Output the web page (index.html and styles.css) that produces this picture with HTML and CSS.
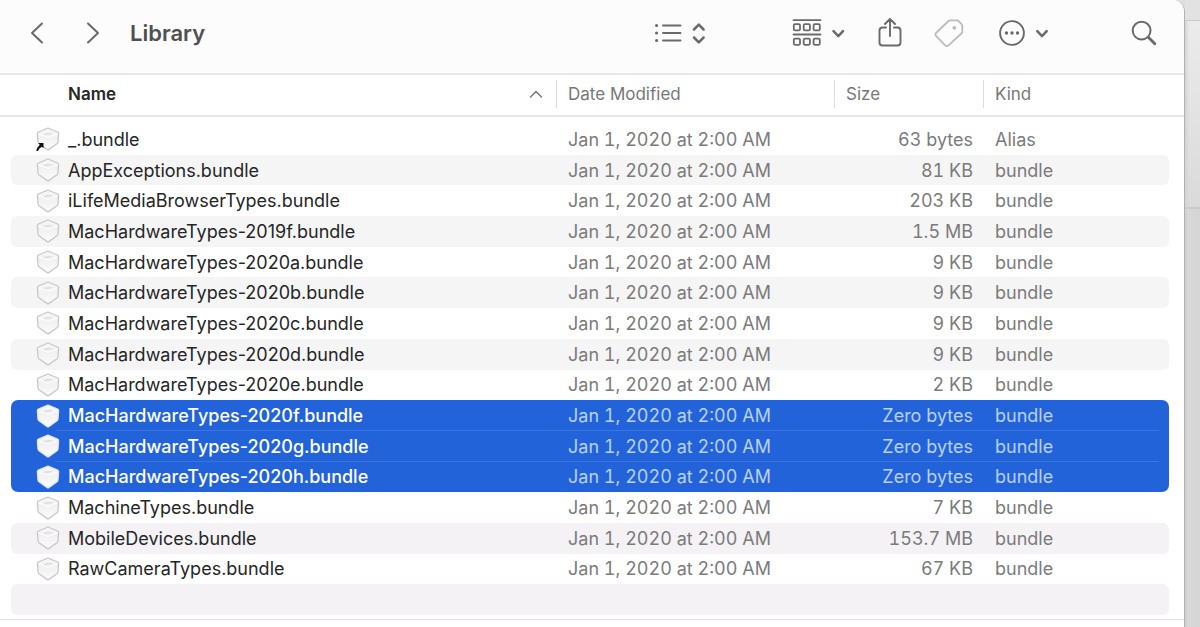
FILE: index.html
```
<!DOCTYPE html>
<html lang="en">
<head>
<meta charset="utf-8">
<title>Library</title>
<link rel="stylesheet" href="styles.css">
</head>
<body>
<svg class="defs" aria-hidden="true">
  <defs>
    <linearGradient id="face" x1="0" y1="0" x2="0" y2="1">
      <stop offset="0" stop-color="#f8f8f8"/>
      <stop offset="0.4" stop-color="#f1f1f1"/>
      <stop offset="1" stop-color="#fbfbfb"/>
    </linearGradient>
    <symbol id="bundle" viewBox="0 0 24 24">
      <path d="M12 1 L21.6 5 Q22.7 5.5 22.6 6.7 L22 15 Q21.9 16.2 21 16.8 L12.7 22.6 Q12 23.1 11.3 22.6 L3 16.8 Q2.1 16.2 2 15 L1.4 6.7 Q1.3 5.5 2.4 5 Z" fill="url(#face)" stroke="var(--edge)" stroke-width="1.3" stroke-linejoin="round"/>
      <path d="M3 7 L11 10 Q12 10.4 13 10 L21 7" fill="none" stroke="#fff" stroke-width="1"/>
      <path d="M7.6 7 Q12 5.6 17 6.4 L15.4 7.6 Q12 7 8.8 8Z" fill="#dcdcdc"/>
    </symbol>
  </defs>
</svg>
<div class="desktop">
  <main class="window">
    <header class="toolbar">
      <button class="tool back" aria-label="Back"><svg width="14" height="24" viewBox="0 0 14 24"><path d="M12 2.5 L2 12 L12 21.5"/></svg></button>
      <button class="tool forward" aria-label="Forward"><svg width="14" height="24" viewBox="0 0 14 24"><path d="M2 2.5 L12 12 L2 21.5"/></svg></button>
      <h1 class="title">Library</h1>
      <div class="actions">
        <button class="tool" aria-label="View as list"><svg width="52" height="24" viewBox="0 0 52 24"><path d="M9 4.5H26.5M9 12H26.5M9 19.5H26.5" stroke-width="1.9"/><path class="dot" d="M1 4.5a1.6 1.6 0 1 0 3.2 0a1.6 1.6 0 1 0-3.2 0M1 12a1.6 1.6 0 1 0 3.2 0a1.6 1.6 0 1 0-3.2 0M1 19.5a1.6 1.6 0 1 0 3.2 0a1.6 1.6 0 1 0-3.2 0"/><path d="M40 8.5L44.8 3.7L49.6 8.5M40 16.5L44.8 21.3L49.6 16.5" stroke-width="2.5"/></svg></button>
        <button class="tool group" aria-label="Group items"><svg width="54" height="28" viewBox="0 0 54 28"><g stroke-width="1.8"><path d="M1.5 1.2H28.5M1.5 15.5H28.5"/><rect x="1.8" y="5.2" width="6.2" height="6.2" rx="1.2"/><rect x="11.7" y="5.2" width="6.2" height="6.2" rx="1.2"/><rect x="21.6" y="5.2" width="6.2" height="6.2" rx="1.2"/><rect x="1.8" y="19.6" width="6.2" height="6.2" rx="1.2"/><rect x="11.7" y="19.6" width="6.2" height="6.2" rx="1.2"/><rect x="21.6" y="19.6" width="6.2" height="6.2" rx="1.2"/></g><path d="M41.5 12.2L46.3 17.2L51 12.2" stroke-width="2.5"/></svg></button>
        <button class="tool share" aria-label="Share"><svg width="24" height="30" viewBox="0 0 24 30"><path d="M8 9.5H4.5Q1.5 9.5 1.5 12.5V24.5Q1.5 27.5 4.5 27.5H19.5Q22.5 27.5 22.5 24.5V12.5Q22.5 9.5 19.5 9.5H16M12 18V1.5M7 6L12 1L17 6" stroke-width="1.9"/></svg></button>
        <button class="tool tag" aria-label="Edit tags" disabled><svg width="30" height="30" viewBox="0 0 30 30"><path d="M16.2 2.4H22.6Q23.8 2.4 24.8 3.4L27.3 5.9Q28.3 6.9 28.3 8.2V13.4Q28.3 14.6 27.4 15.5L14.5 27.3Q12.8 28.8 11.2 27.3L2 17.8Q.8 16.4 2 15L14 3.5Q15 2.4 16.2 2.4Z" stroke-width="1.8"/><circle class="dot" cx="20.4" cy="9.8" r="1.9"/></svg></button>
        <button class="tool more" aria-label="More actions"><svg width="50" height="28" viewBox="0 0 50 28"><circle cx="13" cy="14" r="11.9" stroke-width="1.9"/><path class="dot" d="M5.8 14a1.7 1.7 0 1 0 3.4 0a1.7 1.7 0 1 0-3.4 0M11.3 14a1.7 1.7 0 1 0 3.4 0a1.7 1.7 0 1 0-3.4 0M16.8 14a1.7 1.7 0 1 0 3.4 0a1.7 1.7 0 1 0-3.4 0"/><path d="M38.3 12.2L43 17.2L47.7 12.2" stroke-width="2.5"/></svg></button>
        <button class="tool search" aria-label="Search"><svg width="26" height="26" viewBox="0 0 26 26"><circle cx="10.6" cy="10.6" r="8.9" stroke-width="2"/><path d="M17.3 17.3L23.8 23.8" stroke-width="2.9"/></svg></button>
      </div>
    </header>
    <div class="list">
      <table class="files">
        <colgroup><col class="c-left"><col class="c-name"><col class="c-date"><col class="c-size"><col class="c-kind"><col class="c-right"></colgroup>
        <thead><tr><td></td><th class="sorted" scope="col"><div class="heading"><span>Name</span><svg width="14" height="8" viewBox="0 0 14 8"><path d="M1.5 7L7 1.5L12.5 7"/></svg></div></th><th scope="col"><div class="heading">Date Modified</div></th><th scope="col"><div class="heading">Size</div></th><th scope="col"><div class="heading">Kind</div></th><td></td></tr></thead>
        <tbody id="rows"></tbody>
      </table>
    </div>
    <footer class="pathbar"></footer>
  </main>
  <div class="behind" aria-hidden="true"><div class="edge-top"></div><div class="edge-mid"></div></div>
</div>
<script src="files.js"></script>
</body>
</html>
```
FILE: styles.css
```
* { box-sizing: border-box; }
body {
  margin: 0;
  font-family: Inter, "Noto Sans", sans-serif;
  font-size: 18px;
  color: #262626;
  background: #dedede;
}
.defs { position: absolute; width: 0; height: 0; }
.desktop { display: flex; min-height: 100vh; }
.window {
  flex: 1;
  min-width: 0;
  display: flex;
  flex-direction: column;
  background: #fff;
  border-right: 1px solid #b2b2b2;
  border-top-right-radius: 12px;
  overflow: hidden;
}
.behind {
  width: 15px;
  display: flex;
  flex-direction: column;
  background: linear-gradient(to right, #cfcfcf, #d9d8d9 3px, #d6d5d6);
}
.edge-top { height: 21px; background: #e2e2e2; border-bottom: 1px solid #cacaca; }
.edge-mid { height: 188px; background: linear-gradient(to right, #d2d2d2, transparent 4px), linear-gradient(#ebebeb, #dadada); border-bottom: 2px solid #cacaca; }

.toolbar {
  display: flex;
  align-items: center;
  height: 75px;
  padding: 0 27px 8px 30px;
  background: #fcfcfc;
  border-bottom: 2px solid #e7e7e7;
}
.tool {
  display: flex;
  padding: 0;
  border: 0;
  background: none;
  color: #6a6a6a;
}
.tool svg { fill: none; stroke: currentColor; stroke-width: 2; stroke-linecap: round; stroke-linejoin: round; }
.tool .dot { fill: currentColor; stroke: none; }
.tool:disabled { color: #bcbcbc; }
.forward { margin-left: 42px; }
.title { margin: 0 0 0 30px; font-size: 22px; font-weight: 600; line-height: 28px; color: #505050; }
.actions { display: flex; align-items: center; margin-left: auto; }
.group { margin-left: 86px; }
.share { margin-left: 32px; }
.tag { margin-left: 32px; }
.more { margin-left: 35px; }
.search { margin-left: 82px; }

.list { flex: 1; display: grid; }
.files { width: 100%; height: 100%; table-layout: fixed; border-collapse: separate; border-spacing: 0; }
.files td, .files th { padding: 0; white-space: nowrap; }
.c-left { width: 11px; }
.c-date { width: 278px; }
.c-size { width: 149px; }
.c-kind { width: 186px; }
.c-right { width: 15px; }

thead td, thead th { height: 42px; border-bottom: 2px solid #e7e7e7; }
thead .heading { margin-bottom: 2px; }
thead th { font-size: 17px; font-weight: 400; color: #777; text-align: left; }
.heading { display: flex; align-items: center; height: 28px; padding-left: 11px; border-left: 1px solid #ddd; }
thead .sorted { font-weight: 600; color: #262626; }
.sorted .heading { justify-content: space-between; padding: 0 13px 0 57px; border-left: 0; }
.heading svg { fill: none; stroke: #777; stroke-width: 1.5; stroke-linecap: round; stroke-linejoin: round; }

tbody::before { content: ""; display: table-row; height: 7px; }
tbody td { color: #7b7b7b; }
tbody .name { color: #262626; }
.entry { display: flex; align-items: center; height: 24px; padding-left: 25px; gap: 8px; }
.icon { position: relative; width: 24px; height: 24px; --edge: #c8c8c8; }
.icon svg { display: block; width: 24px; height: 24px; }
.icon .alias { position: absolute; left: 0; bottom: 0; width: 8px; height: 9px; fill: #111; }
tbody .date, tbody .kind { padding-left: 12px; }
tbody .date, tbody .size { font-variant-numeric: tabular-nums; }
tbody .size { padding-right: 10px; text-align: right; }
.stripe .cell { background: #f5f5f5; }
.stripe.tinted .cell { background: #f4f2f5; }
.stripe .name { border-radius: 6px 0 0 6px; }
.stripe .kind { border-radius: 0 6px 6px 0; }

.selected .cell { position: relative; background: #2363da; color: #b9d1fb; }
.selected .name { color: #fff; font-weight: 500; }
.selected .icon { --edge: #dfe6f5; }
.selected.first .name { border-top-left-radius: 7px; }
.selected.first .kind { border-top-right-radius: 7px; }
.selected.last .name { border-bottom-left-radius: 7px; }
.selected.last .kind { border-bottom-right-radius: 7px; }
.selected:not(.last) .cell::after { content: ""; position: absolute; left: 0; right: 0; bottom: 0; height: 1px; background: #3b75e0; }
.selected:not(.last) .name::after { left: 45px; }
.selected:not(.last) .kind::after { right: 10px; }

.pathbar { height: 8px; margin-top: 4px; border-top: 1px solid #dfdfdf; }
```
FILE: files.js
```
const files = [
  ["_.bundle", "63 bytes", "Alias"],
  ["AppExceptions.bundle", "81 KB", "bundle"],
  ["iLifeMediaBrowserTypes.bundle", "203 KB", "bundle"],
  ["MacHardwareTypes-2019f.bundle", "1.5 MB", "bundle"],
  ["MacHardwareTypes-2020a.bundle", "9 KB", "bundle"],
  ["MacHardwareTypes-2020b.bundle", "9 KB", "bundle"],
  ["MacHardwareTypes-2020c.bundle", "9 KB", "bundle"],
  ["MacHardwareTypes-2020d.bundle", "9 KB", "bundle"],
  ["MacHardwareTypes-2020e.bundle", "2 KB", "bundle"],
  ["MacHardwareTypes-2020f.bundle", "Zero bytes", "bundle", "selected first"],
  ["MacHardwareTypes-2020g.bundle", "Zero bytes", "bundle", "selected"],
  ["MacHardwareTypes-2020h.bundle", "Zero bytes", "bundle", "selected last"],
  ["MachineTypes.bundle", "7 KB", "bundle"],
  ["MobileDevices.bundle", "153.7 MB", "bundle"],
  ["RawCameraTypes.bundle", "67 KB", "bundle"],
  ["", "", ""]
];
const arrow = '<svg class="alias" viewBox="0 0 8 9"><path d="M2.2 1H7.5V6.3L5.8 4.8Q3.2 6.3 1.8 9H.2Q1 5.3 3.8 2.8Z"/></svg>';
document.getElementById("rows").innerHTML = files.map(([name, size, kind, state], i) => {
  const cls = state || (i % 2 ? "stripe" + (i > 11 ? " tinted" : "") : "");
  const icon = name ? `<span class="icon"><svg><use href="#bundle"/></svg>${kind === "Alias" ? arrow : ""}</span>` : "";
  return `<tr class="${cls}"><td></td><td class="cell name"><div class="entry">${icon}<span>${name}</span></div></td>` +
    `<td class="cell date">${name ? "Jan 1, 2020 at 2:00 AM" : ""}</td><td class="cell size">${size}</td><td class="cell kind">${kind}</td><td></td></tr>`;
}).join("");
```
